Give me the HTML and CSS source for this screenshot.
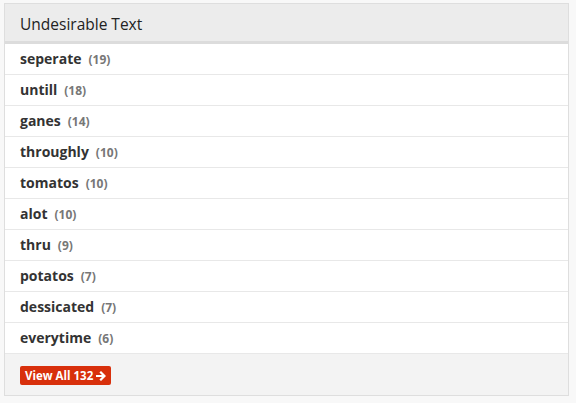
FILE: index.html
```html
<!DOCTYPE html>
<html>
<head>
<meta charset="utf-8">
<link rel="stylesheet" href="styles.css">
</head>
<body>
<div class="panel">
  <div class="panel-head">Undesirable Text</div>
  <ul class="list">
    <li><span class="word">seperate</span><span class="count">(19)</span></li>
    <li><span class="word">untill</span><span class="count">(18)</span></li>
    <li><span class="word">ganes</span><span class="count">(14)</span></li>
    <li><span class="word">throughly</span><span class="count">(10)</span></li>
    <li><span class="word">tomatos</span><span class="count">(10)</span></li>
    <li><span class="word">alot</span><span class="count">(10)</span></li>
    <li><span class="word">thru</span><span class="count">(9)</span></li>
    <li><span class="word">potatos</span><span class="count">(7)</span></li>
    <li><span class="word">dessicated</span><span class="count">(7)</span></li>
    <li><span class="word">everytime</span><span class="count">(6)</span></li>
  </ul>
  <div class="panel-foot">
    <a class="btn" href="#">View All 132 <svg class="arrow" width="10" height="10" viewBox="0 0 10 10"><path d="M1 5h7M5 1.5L8.5 5L5 8.5" fill="none" stroke="#fff" stroke-width="2.2" stroke-linecap="square"/></svg></a>
  </div>
</div>
</body>
</html>
```

FILE: styles.css
```css
html, body {
  margin: 0;
  padding: 0;
  background: #f8f8f8;
}
body {
  padding: 3px 7px 0 4px;
  font-family: "Open Sans", "DejaVu Sans", sans-serif;
}
.panel {
  width: 563px;
  border: 1px solid #dedede;
  background: #fff;
}
.panel-head {
  height: 37px;
  line-height: 40px;
  padding-left: 15px;
  background: #ececec;
  border-bottom: 3px solid #dcdcdc;
  font-size: 15.5px;
  color: #222;
  box-sizing: border-box;
  height: 40px;
}
.list {
  list-style: none;
  margin: 0;
  padding: 0;
}
.list li {
  border-bottom: 1px solid #e8e8e8;
  padding-left: 15px;
  display: flex;
  align-items: center;
  gap: 7px;
  padding-bottom: 1px;
  box-sizing: border-box;
  height: 31px;
}
.word {
  font-weight: 700;
  font-size: 14px;
  color: #333;
}
.count {
  font-weight: 700;
  font-size: 12px;
  color: #777;
  padding-top: 1px;
}
.panel-foot {
  background: #f3f3f3;
  height: 41px;
  padding-left: 15px;
  display: flex;
  align-items: center;
}
.btn {
  display: inline-flex;
  align-items: center;
  gap: 3px;
  background: #d8300c;
  color: #fff;
  font-size: 11.5px;
  font-weight: 700;
  text-decoration: none;
  padding: 0 5px;
  height: 19px;
  border-radius: 2px;
  margin-top: 2px;
}
.arrow {
  display: block;
}
```
